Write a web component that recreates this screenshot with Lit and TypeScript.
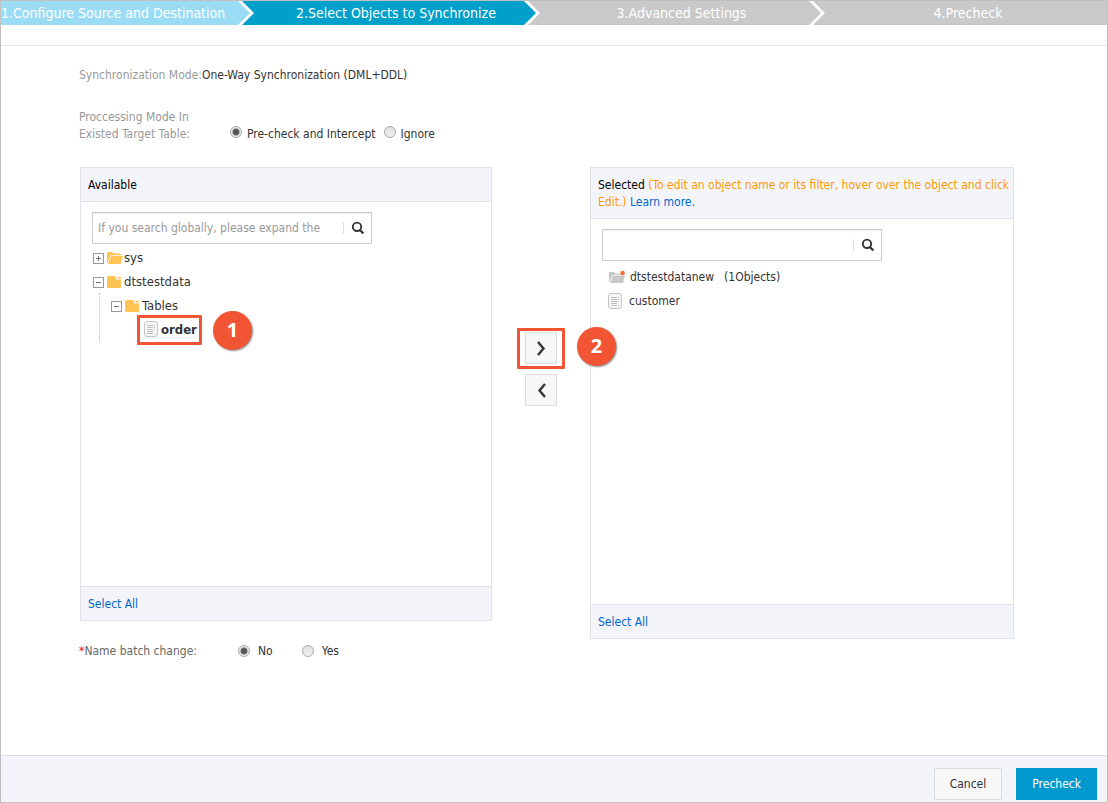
import { LitElement, html, css, nothing } from "lit";
import { customElement, property } from "lit/decorators.js";
import { classMap } from "lit/directives/class-map.js";

const searchIcon = html`<svg class="search-icon" width="14" height="14" viewBox="0 0 14 14" aria-hidden="true">
  <circle cx="6" cy="5.8" r="4.2" fill="none" stroke="#333" stroke-width="1.9" />
  <path d="M8.800 9 L12.4 12.4" fill="none" stroke="#333" stroke-width="2.3" />
</svg>`;

const fileIcon = html`<svg class="file-icon" width="14" height="16" viewBox="0 0 14 16" aria-hidden="true">
  <rect x="0.5" y="0.5" width="13" height="15" rx="2.5" fill="#f7f7f7" stroke="#c4c4c4" />
  <path d="M3 4.500H9M3 6.500H9M3 8.500H9M3 10.500H9M3 12.500H9M10 4.500H11M10 6.500H11M10 8.500H11M10 12.500H11" fill="none" stroke="#b8b8b8" stroke-width="0.9" />
</svg>`;

const openFolder = html`<svg width="16" height="14" viewBox="0 0 16 14" aria-hidden="true">
  <path d="M0 12V2Q0 1 1 1H5L6.500 2.500H13Q14 2.500 14 3.500V4.200H3.500L0.600 12Z" fill="#ffc454" />
  <path d="M4 5H16L13.500 13H1Z" fill="#ffc454" />
</svg>`;

const closedFolder = html`<svg width="15" height="14" viewBox="0 0 15 14" aria-hidden="true">
  <path d="M0 3Q0 1 1.500 1H7.500Q9 1 9 2.500V4.500H14V12Q14 13 13 13H1Q0 13 0 12Z" fill="#ffc454" />
  <path d="M10 2H14V3.500H10Z" fill="#ffc454" />
</svg>`;

const greyFolder = html`<svg width="16" height="14" viewBox="0 0 16 14" aria-hidden="true">
  <path d="M0 12V3Q0 2 1 2H5L6.500 3.500H12.500V4.700H3.500L0.600 12Z" fill="#c8c8c8" />
  <path d="M4 5.500H16L14 13H1Z" fill="#c8c8c8" />
  <circle cx="13.600" cy="3" r="2.300" fill="#ff6a33" />
</svg>`;

@customElement("wizard-steps")
export class WizardSteps extends LitElement {
  static styles = css`
    :host { display: block; }
    .steps {
      display: grid;
      grid-template-columns: 237fr 286fr 285fr 298fr;
      margin: 0;
      padding: 0;
      list-style: none;
      font-size: 14px;
      line-height: 24px;
      color: #fff;
    }
    .step { display: flex; height: 24px; min-width: 0; white-space: nowrap; background: #c9c9c9; }
    .step.done { background: #9bdcf5; }
    .step.current { background: #00a0ca; }
    .label { flex: 1; text-align: center; padding-left: 14px; }
    .step:first-child .label { padding: 0; text-align: left; }
    .step:last-child .label { padding-left: 4px; }
    .chevron { flex: none; display: block; }
    .chevron .gap { fill: #fff; }
    .chevron .previous { fill: #c9c9c9; }
    .chevron .previous.done { fill: #9bdcf5; }
    .chevron .previous.current { fill: #00a0ca; }
  `;

  @property({ attribute: false }) steps: string[] = [];
  @property({ type: Number }) current = 1;

  private stateOf(i: number) {
    return { done: i < this.current, current: i === this.current };
  }

  render() {
    return html`<ol class="steps">
      ${this.steps.map(
        (text, i) => html`<li class=${classMap({ step: true, ...this.stateOf(i) })}>
          ${i === 0
            ? nothing
            : html`<svg class="chevron" width="16" height="24" viewBox="0 0 16 24" aria-hidden="true">
                <path class="gap" d="M0 0H4L16 12L4 24H0Z" />
                <path class=${classMap({ previous: true, ...this.stateOf(i - 1) })} d="M0 0L12 12L0 24Z" />
              </svg>`}
          <span class="label">${text}</span>
        </li>`
      )}
    </ol>`;
  }
}

@customElement("app-root")
export class AppRoot extends LitElement {
  static styles = css`
    :host {
      display: block;
      font-family: "DejaVu Sans Condensed", Tahoma, "Noto Sans", sans-serif;
      font-size: 12px;
      line-height: 17px;
      color: #333;
    }
    * { box-sizing: border-box; }
    .page {
      display: flex;
      flex-direction: column;
      min-height: 100vh;
      border: 1px solid #c0c0c0;
      background: #fff;
    }
    .top { padding-bottom: 20px; border-bottom: 1px solid #e5e5e5; }
    main { flex: 1; padding: 21px 93px 20px 78px; }
    a { color: #06c; text-decoration: none; }
    button, input { font: inherit; color: inherit; margin: 0; }
    svg { display: block; flex: none; }

    .field { display: flex; }
    .caption { color: #999; }
    .conflict { margin-top: 25px; align-items: flex-end; }
    .conflict .caption { width: 151px; }
    .options { display: flex; gap: 8px; }
    .options label, .rename label { display: flex; gap: 5px; align-items: center; }
    .rename { display: flex; margin-top: 4px; }
    .rename .caption { width: 159px; color: #666; }
    .rename label { gap: 8px; margin-right: 29px; }
    .star { color: #f00; }
    input[type="radio"] {
      appearance: none;
      width: 12px;
      height: 12px;
      flex: none;
      border: 1px solid #aaa;
      border-radius: 50%;
      background: linear-gradient(#e0e0e0, #f0f0f0);
    }
    .options input { margin-bottom: 5px; }
    .rename input { margin-bottom: 2px; }
    input[type="radio"]:checked {
      background: radial-gradient(circle, #555 0 2px, #666 3px, #e8e8e8 4px);
    }

    .transfer {
      display: grid;
      grid-template-columns: 412fr 98fr 424fr;
      align-items: start;
      margin: 24px 0 0 1px;
    }
    .panel { border: 1px solid #e0e4ea; }
    .panel header { padding: 9px 0 7px 7px; border-bottom: 1px solid #e0e4ea; background: #f4f5fa; color: #000; }
    .panel footer { padding: 9px 7px 7px; border-top: 1px solid #e0e4ea; background: #f4f5fa; }
    .hint { color: #f90; }
    .content { height: 384px; padding: 10px 11px; }
    .selected .content { height: 385px; }
    .search {
      display: flex;
      align-items: center;
      width: 280px;
      height: 32px;
      border: 1px solid #ccc;
      box-shadow: inset 0 1px 1px #eee;
    }
    .search input {
      width: 224px;
      margin: 0 21px 0 5px;
      padding: 1px 0 0;
      border: 0;
      outline: 0;
      background: none;
    }
    .search input::placeholder { color: #999; opacity: 1; }
    .search button {
      display: flex;
      border: 0;
      border-left: 1px solid #ddd;
      height: 12px;
      padding: 0 0 0 7px;
      align-items: center;
      background: none;
    }

    .tree, .tree ul, .objects { list-style: none; margin: 0; padding: 0; }
    .tree { margin-top: 1px; font-size: 13px; }
    .row { display: flex; align-items: center; height: 24px; }
    .row .toggle {
      width: 11px;
      height: 11px;
      margin: 2px 3px 0 1px;
      padding: 0;
      border: 0;
      background: none;
    }
    .folder { width: 16px; margin: 2px 1px 0 0; }
    .tree ul ul { padding-left: 8px; }
    .tree > li > ul { margin-left: 7px; padding-left: 10px; border-left: 1px dotted #bbb; }
    .leaf { position: relative; display: flex; gap: 3px; align-items: center; height: 24px; padding-left: 26px; font-weight: 700; }
    .objects { padding: 4px 0 0 6px; }
    .object { display: flex; align-items: center; gap: 5px; height: 24px; padding-left: 1px; }
    .object.table { padding-left: 0; gap: 7px; }
    .count { margin-left: 5px; }

    .moves { display: flex; flex-direction: column; align-items: center; gap: 10px; padding-top: 165px; }
    .move { position: relative; display: flex; }
    .move button {
      display: grid;
      place-items: center;
      width: 32px;
      height: 32px;
      padding: 0;
      border: 1px solid #ddd;
      background: #f7f7f7;
    }
    .frame { position: absolute; border: 3px solid #f15533; border-radius: 1px; pointer-events: none; }
    .frame.first { left: 19px; top: -2px; width: 65px; height: 30px; }
    .frame.second { left: -8px; top: -4px; width: 48px; height: 41px; }
    .badge {
      position: absolute;
      width: 39px;
      height: 39px;
      border-radius: 50%;
      background: #f15533;
      color: #fff;
      box-shadow: 1px 1px 2px #888;
      font-family: "Noto Sans", sans-serif;
      font-size: 20px;
      font-weight: 700;
      line-height: 38px;
      text-align: center;
    }
    .badge.first { left: 95px; top: -6px; }
    .badge.second { left: 52px; top: -5px; z-index: 1; }

    .actions {
      display: flex;
      justify-content: flex-end;
      gap: 14px;
      padding: 12px 10px 2px;
      border-top: 1px solid #ddd;
      background: #f4f5fa;
    }
    .actions button { height: 32px; padding: 1px 15px 0; border: 1px solid #ddd; background: #f7f7f7; }
    .actions .primary { border-color: #0099cd; background: #0099cd; color: #fff; }
  `;

  private toggle(open: boolean, name: string) {
    return html`<button class="toggle" aria-expanded=${open} aria-label=${name}>
      <svg width="11" height="11" viewBox="0 0 11 11" aria-hidden="true">
        <rect x="0.5" y="0.5" width="10" height="10" fill="#fff" stroke="#999" />
        <path d=${open ? "M3 5.500H8" : "M3 5.500H8M5.500 3V8"} fill="none" stroke="#777" />
      </svg>
    </button>`;
  }

  private search(label: string, placeholder: string) {
    return html`<div class="search">
      <input type="text" aria-label=${label} placeholder=${placeholder} />
      <button aria-label="Search">${searchIcon}</button>
    </div>`;
  }

  private arrow(points: string) {
    return html`<svg width="16" height="16" viewBox="0 0 16 16" aria-hidden="true">
      <path d=${points} fill="none" stroke="#333" stroke-width="2.400" />
    </svg>`;
  }

  render() {
    return html`<div class="page">
      <div class="top">
        <wizard-steps
          .steps=${["1.Configure Source and Destination", "2.Select Objects to Synchronize", "3.Advanced Settings", "4.Precheck"]}
          .current=${1}
        ></wizard-steps>
      </div>
      <main>
        <div class="field"><span class="caption">Synchronization Mode:</span><span>One-Way Synchronization (DML+DDL)</span></div>
        <div class="field conflict" role="radiogroup" aria-labelledby="conflict">
          <span class="caption" id="conflict">Proccessing Mode In<br />Existed Target Table:</span>
          <div class="options">
            <label><input type="radio" name="conflict" checked />Pre-check and Intercept</label>
            <label><input type="radio" name="conflict" />Ignore</label>
          </div>
        </div>

        <div class="transfer">
          <section class="panel">
            <header>Available</header>
            <div class="content">
              ${this.search("Search available objects", "If you search globally, please expand the node first")}
              <ul class="tree">
                <li><div class="row">${this.toggle(false, "sys")}<span class="folder">${openFolder}</span>sys</div></li>
                <li>
                  <div class="row">${this.toggle(true, "dtstestdata")}<span class="folder">${closedFolder}</span>dtstestdata</div>
                  <ul>
                    <li>
                      <div class="row">${this.toggle(true, "Tables")}<span class="folder">${closedFolder}</span>Tables</div>
                      <ul>
                        <li class="leaf">
                          ${fileIcon}<span>order</span>
                          <span class="frame first"></span><span class="badge first">1</span>
                        </li>
                      </ul>
                    </li>
                  </ul>
                </li>
              </ul>
            </div>
            <footer><a href="#">Select All</a></footer>
          </section>

          <div class="moves">
            <div class="move">
              <button aria-label="Add to selected">${this.arrow("M5 2L10.500 8.500L5 15")}</button>
              <span class="frame second"></span><span class="badge second">2</span>
            </div>
            <div class="move"><button aria-label="Remove from selected">${this.arrow("M12 2L6.500 8.500L12 15")}</button></div>
          </div>

          <section class="panel selected">
            <header>Selected <span class="hint">(To edit an object name or its filter, hover over the object and click Edit.)</span> <a href="#">Learn more.</a></header>
            <div class="content">
              ${this.search("Search selected objects", "")}
              <ul class="objects">
                <li class="object">${greyFolder}<span>dtstestdatanew</span><span class="count">(1Objects)</span></li>
                <li class="object table">${fileIcon}<span>customer</span></li>
              </ul>
            </div>
            <footer><a href="#">Select All</a></footer>
          </section>
        </div>

        <div class="rename" role="radiogroup" aria-labelledby="rename">
          <span class="caption" id="rename"><span class="star">*</span>Name batch change:</span>
          <label><input type="radio" name="rename" checked />No</label>
          <label><input type="radio" name="rename" />Yes</label>
        </div>
      </main>
      <div class="actions">
        <button>Cancel</button>
        <button class="primary">Precheck</button>
      </div>
    </div>`;
  }
}
